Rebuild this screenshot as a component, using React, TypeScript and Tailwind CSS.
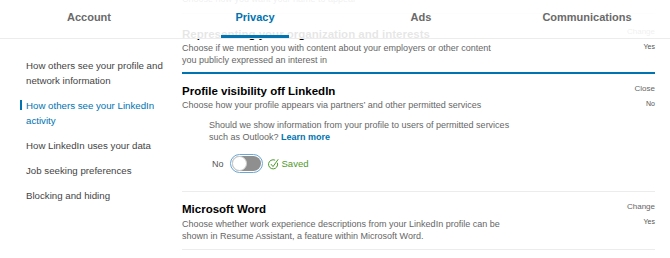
import React from "react";

const tabs = ["Account", "Privacy", "Ads", "Communications"];

const sideItems = [
  "How others see your profile and network information",
  "How others see your LinkedIn activity",
  "How LinkedIn uses your data",
  "Job seeking preferences",
  "Blocking and hiding",
];

const SavedIcon = () => (
  <svg width="11" height="12" viewBox="0 0 11 12" fill="none" stroke="#4d9a2a" strokeWidth="1" strokeLinecap="round" strokeLinejoin="round">
    <path d="M9.6 5.2 A4.6 4.6 0 1 1 6.8 2" />
    <path d="M3.2 6.4 L5 8.6 L10 1.6" />
  </svg>
);

const Toggle = () => (
  <div className="rounded-full border border-[#6aa6d6] p-[1px]">
    <div className="flex h-[15px] w-[29px] items-center rounded-full bg-[#8f8f8f]">
      <div className="h-[15px] w-[15px] rounded-full border border-[#cfcfcf] bg-white" />
    </div>
  </div>
);

const RightCol = ({ action, value }: { action: string; value: string }) => (
  <div className="flex shrink-0 flex-col items-end">
    <span className="text-[8px] leading-[10px] text-[#666]">{action}</span>
    <span className="mt-[6px] text-[7px] leading-[8px] text-[#555]">{value}</span>
  </div>
);

export default function App() {
  return (
    <div className="relative h-[258px] w-[670px] overflow-hidden bg-white font-['Liberation_Sans',Arial,sans-serif]">
      {/* tabs, over scrolled content */}
      <header className="absolute inset-x-0 top-0 z-10 grid h-[39px] grid-cols-4 border-b border-[#ececec] bg-white/90 pl-[6px]">
        {tabs.map((t) => (
          <div key={t} className="flex justify-center">
            <div
              className={
                t === "Privacy"
                  ? "relative flex h-full items-center px-[14px] pb-[3px] text-[11px] font-bold text-[#0073b1]"
                  : "relative flex h-full items-center px-[14px] pb-[3px] text-[11px] font-bold text-[#6a6a6a]"
              }
            >
              {t}
              {t === "Privacy" && <span className="absolute inset-x-0 bottom-0 h-[3px] bg-[#0073b1]" />}
            </div>
          </div>
        ))}
      </header>

      <div className="flex">
        {/* sidebar */}
        <nav className="flex w-[182px] shrink-0 flex-col gap-[10px] pl-[26px] pr-[14px] pt-[58px] text-[9.7px] leading-[15px] text-[#444]">
          {sideItems.map((s, i) =>
            i === 1 ? (
              <div key={s} className="relative text-[#0073b1]">
                <span className="absolute -left-[6px] top-[2px] h-[10px] w-[2px] bg-[#0073b1]" />
                {s}
              </div>
            ) : (
              <div key={s}>{s}</div>
            )
          )}
        </nav>

        {/* settings list (scrolled) */}
        <main className="-mt-[7px] w-[473px] shrink-0 text-[9px] leading-[12px] text-[#666]">
          <div className="pb-[8px]">
            <p>Choose how you want your name to appear</p>
          </div>

          <section className="flex justify-between border-t border-[#ececec] pb-[6px] pt-[13px]">
            <div>
              <h3 className="text-[11.5px] font-bold leading-[14px] text-black">Representing your organization and interests</h3>
              <p className="mt-[1px] w-[313px]">
                Choose if we mention you with content about your employers or other content you publicly expressed an interest in
              </p>
            </div>
            <RightCol action="Change" value="Yes" />
          </section>

          <section className="border-t-2 border-[#0073b1] pb-[18px] pt-[10px]">
            <div className="flex justify-between">
              <div>
                <h3 className="text-[11.5px] font-bold leading-[14px] text-black">Profile visibility off LinkedIn</h3>
                <p className="mt-[1px]">Choose how your profile appears via partners’ and other permitted services</p>
              </div>
              <RightCol action="Close" value="No" />
            </div>
            <p className="ml-[27px] mt-[8px] w-[305px]">
              Should we show information from your profile to users of permitted services such as Outlook?{" "}
              <a className="font-bold text-[#0073b1]">Learn more</a>
            </p>
            <div className="ml-[30px] mt-[11px] flex items-center">
              <span className="mr-[6px] text-[9px] text-[#555]">No</span>
              <Toggle />
              <span className="ml-[5px] flex items-center gap-[3px] text-[9.5px] text-[#4d9a2a]">
                <SavedIcon />
                Saved
              </span>
            </div>
          </section>

          <section className="flex justify-between border-y border-[#ececec] pb-[7px] pt-[10px]">
            <div>
              <h3 className="text-[11.5px] font-bold leading-[14px] text-black">Microsoft Word</h3>
              <p className="mt-[2px] w-[330px]">
                Choose whether work experience descriptions from your LinkedIn profile can be shown in Resume Assistant, a feature within Microsoft Word.
              </p>
            </div>
            <RightCol action="Change" value="Yes" />
          </section>
        </main>
      </div>
    </div>
  );
}
